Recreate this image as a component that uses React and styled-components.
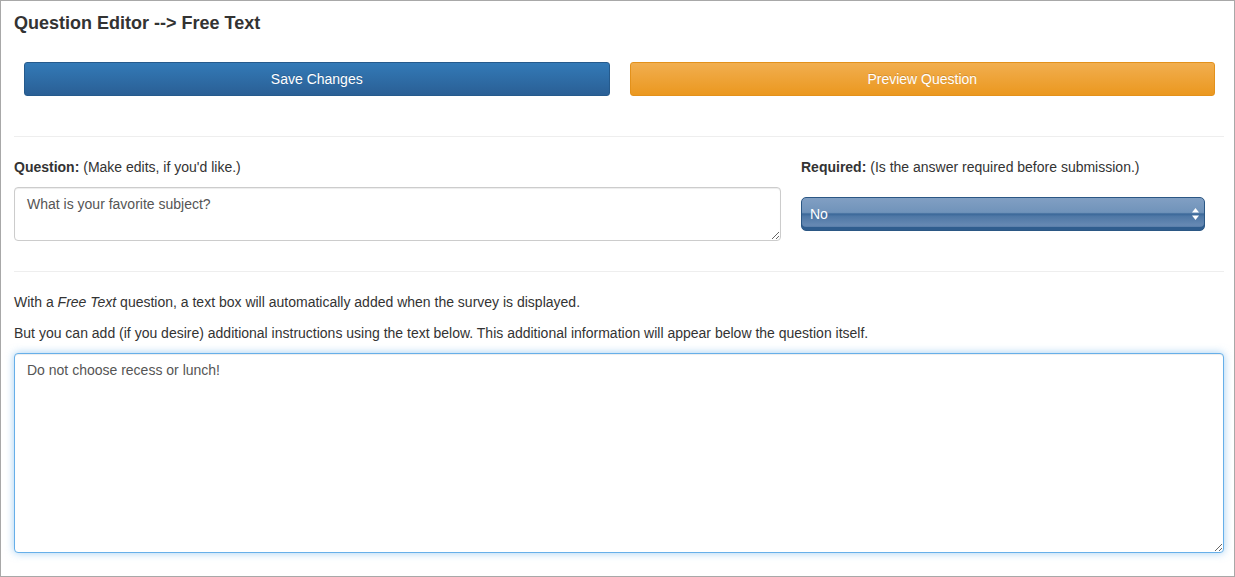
import React, { useEffect, useRef } from "react";
import styled, { createGlobalStyle } from "styled-components";

const Global = createGlobalStyle`
  html, body { margin: 0; padding: 0; background: #fff; }
  body { font-family: "Liberation Sans", Arial, Helvetica, sans-serif; color: #333; }
  * { box-sizing: border-box; }
`;

const Frame = styled.div`
  width: 1235px;
  height: 577px;
  border: 1px solid #a8a8a8;
  padding: 12px 10px 0 13px;
  overflow: hidden;
`;

const Title = styled.h1`
  margin: 0;
  font-size: 18px;
  line-height: 20px;
  font-weight: bold;
  color: #333;
`;

const ButtonRow = styled.div`
  display: grid;
  grid-template-columns: 1fr 1fr;
  gap: 20px;
  margin: 29px 9px 0 10px;
`;

const Button = styled.button`
  height: 34px;
  border-radius: 3px;
  font-family: inherit;
  font-size: 14px;
  color: #fff;
  cursor: pointer;
  border: 1px solid ${(p) => (p.$variant === "warning" ? "#e3911b" : "#255a8c")};
  background: ${(p) =>
    p.$variant === "warning"
      ? "linear-gradient(to bottom, #f1ae4f 0%, #eb981f 100%)"
      : "linear-gradient(to bottom, #337ab7 0%, #2a5f95 100%)"};
  text-shadow: 0 -1px 0 rgba(0, 0, 0, 0.15);
`;

const Rule = styled.hr`
  border: 0;
  border-top: 1px solid #eee;
  margin: ${(p) => p.$top}px 0 0 0;
  height: 0;
`;

const FieldRow = styled.div`
  display: grid;
  grid-template-columns: 767px 404px;
  gap: 20px;
  margin-top: 21px;
`;

const Field = styled.div`
  display: flex;
  flex-direction: column;
`;

const Label = styled.div`
  font-size: 14px;
  line-height: 18px;
  margin-bottom: 11px;
  b { font-weight: bold; }
`;

const TextArea = styled.textarea`
  display: block;
  width: 100%;
  height: ${(p) => p.$h}px;
  padding: 7px 12px;
  font-family: "Liberation Sans", Arial, Helvetica, sans-serif;
  font-size: 14px;
  line-height: 18px;
  color: #555;
  border-radius: 4px;
  border: 1px solid ${(p) => (p.$focus ? "#66afe9" : "#ccc")};
  box-shadow: ${(p) =>
    p.$focus
      ? "inset 0 1px 1px rgba(0,0,0,.075), 0 0 8px rgba(102,175,233,.6)"
      : "inset 0 1px 1px rgba(0,0,0,.075)"};
  outline: none;
  resize: vertical;
`;

const SelectWrap = styled.div`
  position: relative;
  margin-top: 10px;
  height: 34px;
`;

const Select = styled.select`
  appearance: none;
  -webkit-appearance: none;
  width: 100%;
  height: 34px;
  border-radius: 5px;
  border: 1px solid #2b5784;
  padding: 0 24px 0 8px;
  font-family: inherit;
  font-size: 14px;
  color: #fff;
  background: linear-gradient(
    to bottom,
    #819fc3 0%,
    #7093ba 45%,
    #3b6899 50%,
    #4f78a6 58%,
    #6689b3 85%,
    #3f6a99 100%
  );
  box-shadow: inset 0 -3px 0 #2f5d8e;
  outline: none;
`;

const Arrows = styled.svg`
  position: absolute;
  right: 6px;
  top: 11px;
  pointer-events: none;
`;

const Para = styled.p`
  margin: ${(p) => p.$top}px 0 0 0;
  font-size: 14px;
  line-height: 18px;
`;

const InstrWrap = styled.div`
  margin-top: 11px;
`;

export default function App() {
  const ref = useRef(null);
  useEffect(() => {
    const el = ref.current;
    if (el) {
      el.focus();
      const n = el.value.length;
      el.setSelectionRange(n, n);
    }
  }, []);
  return (
    <>
      <Global />
      <Frame>
        <Title>Question Editor --&gt; Free Text</Title>
        <ButtonRow>
          <Button>Save Changes</Button>
          <Button $variant="warning">Preview Question</Button>
        </ButtonRow>
        <Rule $top={40} />
        <FieldRow>
          <Field>
            <Label>
              <b>Question:</b> (Make edits, if you'd like.)
            </Label>
            <TextArea $h={54} defaultValue="What is your favorite subject?" />
          </Field>
          <Field>
            <Label>
              <b>Required:</b> (Is the answer required before submission.)
            </Label>
            <SelectWrap>
              <Select defaultValue="No">
                <option>No</option>
                <option>Yes</option>
              </Select>
              <Arrows width="7" height="12" viewBox="0 0 7 12">
                <path d="M3.5 0 L7 4.5 L0 4.5 Z" fill="#fff" />
                <path d="M0 7.5 L7 7.5 L3.5 12 Z" fill="#fff" />
              </Arrows>
            </SelectWrap>
          </Field>
        </FieldRow>
        <Rule $top={30} />
        <Para $top={21}>
          With a <i>Free Text</i> question, a text box will automatically added when the survey is displayed.
        </Para>
        <Para $top={13}>
          But you can add (if you desire) additional instructions using the text below. This additional information will appear below the question itself.
        </Para>
        <InstrWrap>
          <TextArea ref={ref} $h={200} $focus defaultValue="Do not choose recess or lunch!" />
        </InstrWrap>
      </Frame>
    </>
  );
}
